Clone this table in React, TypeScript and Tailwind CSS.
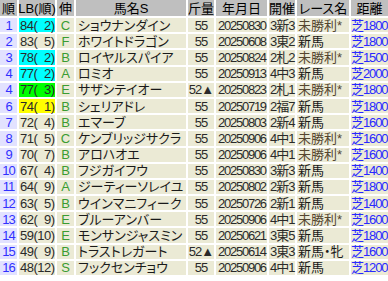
import React from "react";

type Row = {
  no: string;
  lb: string;
  lbBg: string;
  nobi: string;
  name: string;
  kin: string;
  date: string;
  place: string;
  race: string;
  dist: string;
};

const beige = "bg-[#ebead5]";

// LB(順) highlight colours
const cyan = "bg-[#00ffff]";
const lime = "bg-[#00ff00]";
const yellow = "bg-[#ffff00]";

const rows: Row[] = [
  { no: "1", lb: "84(\u20072)", lbBg: cyan, nobi: "C", name: "ショウナンダイン", kin: "55", date: "20250830", place: "3新3", race: "未勝利*", dist: "芝1800" },
  { no: "2", lb: "83(\u20075)", lbBg: beige, nobi: "F", name: "ホワイトドラゴン", kin: "55", date: "20250608", place: "3東2", race: "新馬", dist: "芝1800" },
  { no: "3", lb: "78(\u20072)", lbBg: cyan, nobi: "B", name: "ロイヤルスパイア", kin: "55", date: "20250824", place: "2札2", race: "未勝利*", dist: "芝1500" },
  { no: "4", lb: "77(\u20072)", lbBg: cyan, nobi: "A", name: "ロミオ", kin: "55", date: "20250913", place: "4中3", race: "新馬", dist: "芝2000" },
  { no: "4", lb: "77(\u20073)", lbBg: lime, nobi: "E", name: "サザンテイオー", kin: "52▲", date: "20250823", place: "2札1", race: "未勝利*", dist: "芝1800" },
  { no: "6", lb: "74(\u20071)", lbBg: yellow, nobi: "B", name: "シェリアドレ", kin: "55", date: "20250719", place: "2福7", race: "新馬", dist: "芝1800" },
  { no: "7", lb: "72(\u20074)", lbBg: beige, nobi: "B", name: "エマーブ", kin: "55", date: "20250803", place: "2新4", race: "新馬", dist: "芝1600" },
  { no: "8", lb: "71(\u20075)", lbBg: beige, nobi: "C", name: "ケンブリッジサクラ", kin: "55", date: "20250906", place: "4中1", race: "未勝利*", dist: "芝1600" },
  { no: "9", lb: "70(\u20077)", lbBg: beige, nobi: "B", name: "アロハオエ", kin: "55", date: "20250906", place: "4中1", race: "未勝利*", dist: "芝1600" },
  { no: "10", lb: "67(\u20074)", lbBg: beige, nobi: "B", name: "フジガイフウ", kin: "55", date: "20250830", place: "3新3", race: "新馬", dist: "芝1400" },
  { no: "11", lb: "64(\u20079)", lbBg: beige, nobi: "A", name: "ジーティーソレイユ", kin: "55", date: "20250802", place: "2新3", race: "新馬", dist: "芝1800" },
  { no: "12", lb: "63(\u20075)", lbBg: beige, nobi: "B", name: "ウインマニフィーク", kin: "55", date: "20250726", place: "2新1", race: "新馬", dist: "芝1400" },
  { no: "13", lb: "62(\u20079)", lbBg: beige, nobi: "E", name: "ブルーアンバー", kin: "55", date: "20250906", place: "4中1", race: "未勝利*", dist: "芝1600" },
  { no: "14", lb: "59(10)", lbBg: beige, nobi: "E", name: "モンサンジャスミン", kin: "55", date: "20250621", place: "3東5", race: "新馬", dist: "芝1800" },
  { no: "15", lb: "49(\u20079)", lbBg: beige, nobi: "B", name: "トラストレガート", kin: "52▲", date: "20250614", place: "3東3", race: "新馬・牝", dist: "芝1600" },
  { no: "16", lb: "48(12)", lbBg: beige, nobi: "S", name: "フックセンチョウ", kin: "55", date: "20250906", place: "4中1", race: "新馬", dist: "芝1200" },
];

const headers = ["順", "LB(順)", "伸", "馬名S", "斤量", "年月日", "開催", "レース名", "距離"];

const App: React.FC = () => {
  return (
    <div className="w-[388px] h-[281px] overflow-hidden bg-white text-[13px] leading-[13px] text-black font-['Liberation_Sans','Noto_Sans_CJK_JP',sans-serif] [font-feature-settings:'palt']">
      <div className="grid grid-cols-[17px_36px_17px_110px_26px_51px_26px_52px_37px] grid-rows-[16px_repeat(16,14.2px)] gap-[2px]">
        {/* header row */}
        {headers.map((h) => (
          <div
            key={h}
            className="flex items-center justify-center bg-[#bfbfbf] whitespace-nowrap"
          >
            {h}
          </div>
        ))}

        {rows.map((r, i) => (
          <React.Fragment key={i}>
            <div className="flex items-center justify-center bg-[#e2e2ff] text-[#3030ff] tracking-[-1px]">
              {r.no}
            </div>
            <div className={`flex items-center pl-[1px] whitespace-nowrap text-[#2a2a2a] tracking-[-0.5px] ${r.lbBg}`}>
              {r.lb}
            </div>
            <div className="flex items-center justify-center bg-[#ebead5] text-[#3a9c32]">
              {r.nobi}
            </div>
            <div className="flex items-center pl-[2px] whitespace-nowrap bg-[#ebead5] text-[#1a1a1a]">
              {r.name}
            </div>
            <div className="flex items-center justify-center whitespace-nowrap bg-[#ebead5] text-[#2a2a2a] tracking-[-1px]">
              {r.kin}
            </div>
            <div className="flex items-center pl-[2px] bg-[#ebead5] text-[#2a2a2a] tracking-[-1.25px]">
              {r.date}
            </div>
            <div className="flex items-center pl-[1px] whitespace-nowrap bg-[#ebead5] text-[#2a2a2a] tracking-[-1px]">
              {r.place}
            </div>
            <div
              className={`flex items-center pl-[1px] whitespace-nowrap bg-[#ebead5] ${
                r.race === "未勝利*" ? "text-[#54452f]" : "text-[#1a1a1a]"
              }`}
            >
              {r.race}
            </div>
            <div className="flex items-center whitespace-nowrap bg-[#ebead5] text-[#2828ff] tracking-[-1.1px]">
              {r.dist}
            </div>
          </React.Fragment>
        ))}
      </div>
    </div>
  );
};

export default App;
